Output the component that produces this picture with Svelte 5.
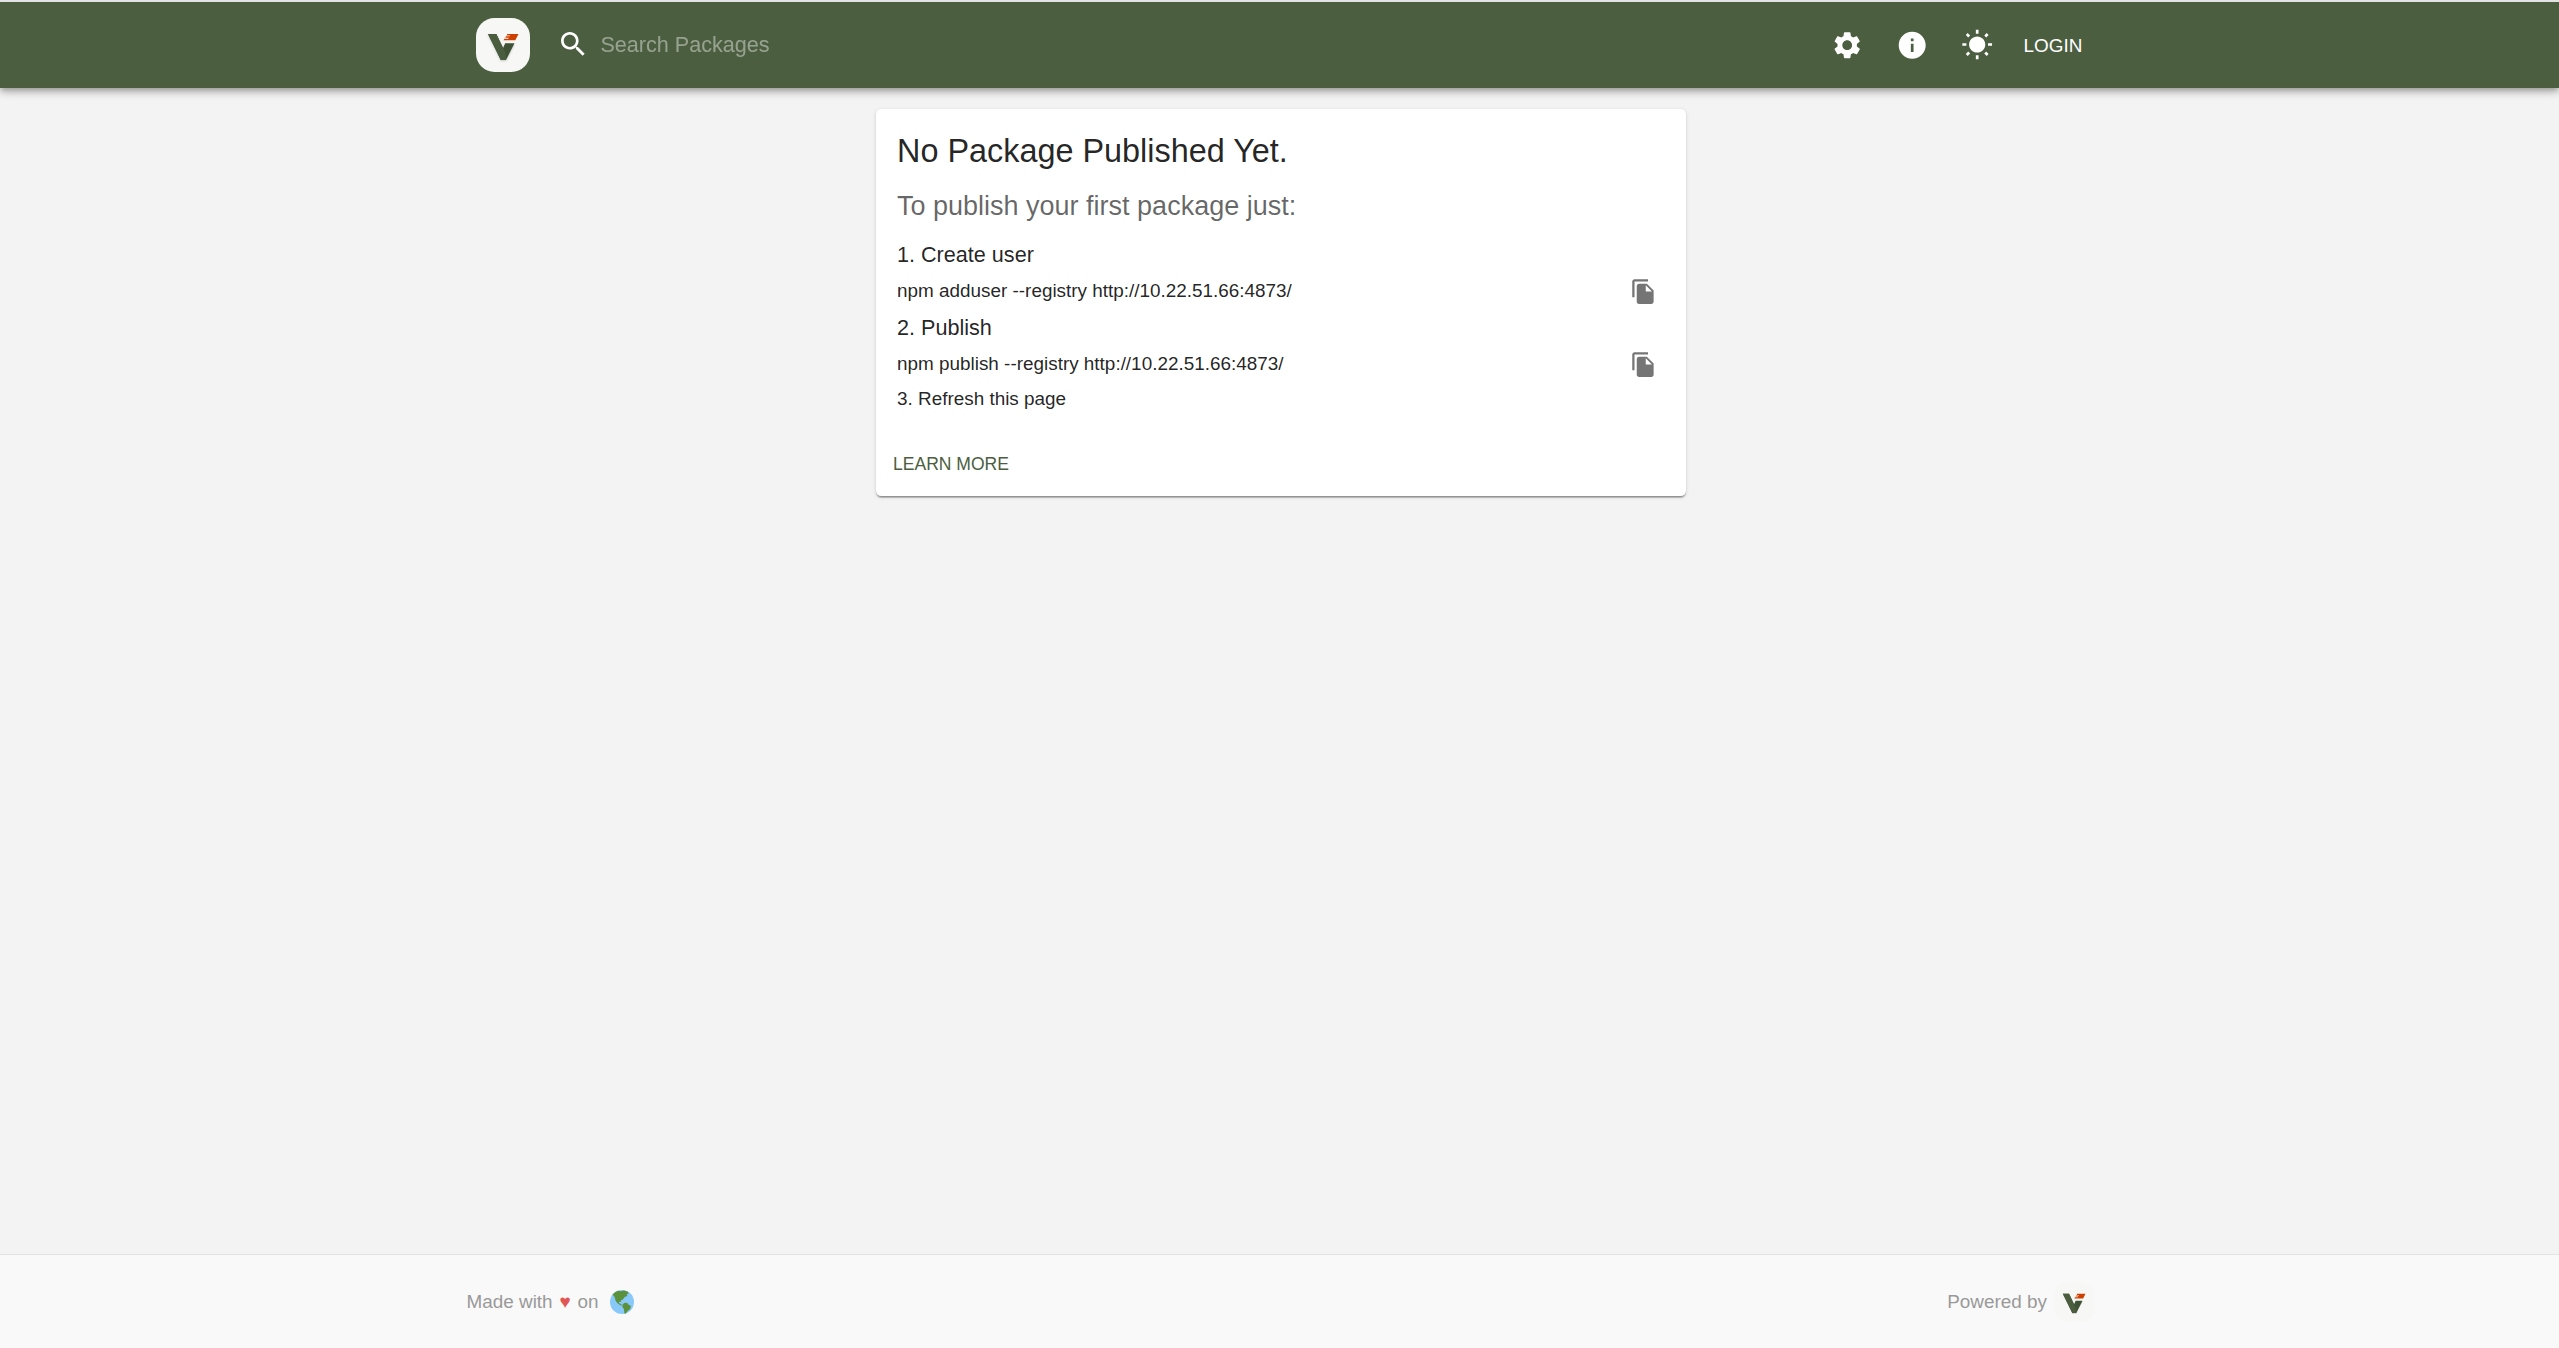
<script>
  const steps = [
    { title: '1. Create user', command: 'npm adduser --registry http://10.22.51.66:4873/' },
    { title: '2. Publish', command: 'npm publish --registry http://10.22.51.66:4873/' },
  ];
</script>

{#snippet logo()}
  <svg class="logo" viewBox="0 0 54 54" aria-label="Verdaccio">
    <rect width="54" height="54" rx="18.5" fill="#f7f8f6" />
    <path class="mark" d="M12 16h8.3l6.8 14 2.1-4.8h9.3L30 42h-5.2z" fill="#405236" />
    <path d="M12 16h8.3l8.700 18L30 42h-5.2z" fill="#4a5e3f" />
    <path d="M31.2 16h11.3l-3.2 6.2H27.5l.8-1.5h4l.5-1h-3.6l.8-1.4h3.6l.4-.9h-3.3z" fill="#cd4000" />
  </svg>
{/snippet}

<div class="page">
  <header>
    <div class="bar">
      {@render logo()}
      <label class="search">
        <svg class="icon" viewBox="0 0 24 24"><path d="M15.5 14h-.79l-.28-.27C15.41 12.59 16 11.11 16 9.5 16 5.91 13.09 3 9.5 3S3 5.91 3 9.5 5.91 16 9.5 16c1.61 0 3.09-.59 4.23-1.57l.27.28v.79l5 4.99L20.49 19l-4.99-5zm-6 0C7.01 14 5 11.99 5 9.5S7.01 5 9.5 5 14 7.01 14 9.5 11.99 14 9.5 14z" /></svg>
        <input placeholder="Search Packages" />
      </label>
      <nav>
        <svg class="icon" viewBox="0 0 24 24"><path d="M19.14 12.94c.04-.3.06-.61.06-.94 0-.32-.02-.64-.07-.94l2.03-1.58c.18-.14.23-.41.12-.61l-1.92-3.32c-.12-.22-.37-.29-.59-.22l-2.39.96c-.5-.38-1.03-.7-1.62-.94l-.36-2.54c-.04-.24-.24-.41-.48-.41h-3.84c-.24 0-.43.17-.47.41l-.36 2.54c-.59.24-1.13.57-1.62.94l-2.39-.96c-.22-.08-.47 0-.59.22L2.74 8.87c-.12.21-.08.47.12.61l2.03 1.58c-.05.3-.09.63-.09.94s.02.64.07.94l-2.03 1.58c-.18.14-.23.41-.12.61l1.92 3.32c.12.22.37.29.59.22l2.39-.96c.5.38 1.03.7 1.62.94l.36 2.54c.05.24.24.41.48.41h3.84c.24 0 .44-.17.47-.41l.36-2.54c.59-.24 1.13-.56 1.62-.94l2.39.96c.22.08.47 0 .59-.22l1.92-3.32c.12-.22.07-.47-.12-.61l-2.01-1.58zM12 15.6c-1.98 0-3.6-1.62-3.6-3.6s1.62-3.6 3.6-3.6 3.6 1.62 3.6 3.6-1.62 3.6-3.6 3.6z" /></svg>
        <svg class="icon" viewBox="0 0 24 24"><path d="M12 2C6.48 2 2 6.48 2 12s4.48 10 10 10 10-4.48 10-10S17.52 2 12 2zm1 15h-2v-6h2v6zm0-8h-2V7h2v2z" /></svg>
        <svg class="icon" viewBox="0 0 24 24"><path d="M6.76 4.84l-1.8-1.79-1.41 1.41 1.79 1.79 1.42-1.41zM4 10.5H1v2h3v-2zm9-9.95h-2V3.5h2V.55zm7.45 3.91l-1.41-1.41-1.79 1.79 1.41 1.41 1.79-1.79zm-3.21 13.7l1.79 1.8 1.41-1.41-1.8-1.79-1.4 1.4zM20 10.5v2h3v-2h-3zm-8-5c-3.31 0-6 2.69-6 6s2.69 6 6 6 6-2.69 6-6-2.69-6-6-6zm-1 16.95h2V19.5h-2v2.95zm-7.45-3.91l1.41 1.41 1.79-1.8-1.41-1.41-1.79 1.8z" /></svg>
        <button class="login">LOGIN</button>
      </nav>
    </div>
  </header>

  <main>
    <section class="card">
      <h1>No Package Published Yet.</h1>
      <h2>To publish your first package just:</h2>
      {#each steps as step}
        <h3>{step.title}</h3>
        <div class="command">
          <span>{step.command}</span>
          <svg class="copy" viewBox="0 0 24 24"><path d="M16 1H4c-1.1 0-2 .9-2 2v14h2V3h12V1zm-1 4l6 6v10c0 1.1-.9 2-2 2H7.99C6.89 23 6 22.1 6 21l.01-14c0-1.1.89-2 1.99-2h7zm-1 7h5.5L14 6.5V12z" /></svg>
        </div>
      {/each}
      <p>3. Refresh this page</p>
      <button class="learn">LEARN MORE</button>
    </section>
  </main>

  <footer>
    <div class="foot">
      <div class="made">
        <span>Made with</span>
        <span class="heart">♥</span>
        <span>on</span>
        <svg class="globe" viewBox="0 0 36 36">
          <circle cx="18" cy="18" r="18" fill="#88c9f9" />
          <path d="M3.500 7.500C6 4.500 9 2.200 12 1.200l4 .8 5-1.200 6 2 1 2.700-3 .5 1 3-4 1.500-3 4-3 1 1 2.500-3-.5-1 1.500 3 2 2 1.500-1 1-5-3-3.500-4-1.500-5.500-2-3z" fill="#5c913b" />
          <path d="M19 21.500l3-2.500 4 .5 2 2.500 3.500 2-1.500 5-4 3-2.500 3.500-2-.5-.500-6-2.500-4z" fill="#5c913b" />
        </svg>
      </div>
      <div class="powered">
        <span>Powered by</span>
        {@render logo()}
      </div>
    </div>
  </footer>
</div>

<style>
  :global(body) {
    background: #f3f3f3;
  }
  .page {
    display: flex;
    flex-direction: column;
    height: 1348px;
    box-sizing: border-box;
    border-top: 2px solid #e3e3e3;
    font-family: 'Liberation Sans', Arial, sans-serif;
    font-size: 18.9px;
    color: rgba(0, 0, 0, 0.87);
    overflow: hidden;
  }
  header {
    height: 86px;
    background: #4b5e40;
    color: #fff;
    box-shadow:
      0 3px 5px -1px rgba(0, 0, 0, 0.2),
      0 5px 7px rgba(0, 0, 0, 0.14),
      0 1px 13px rgba(0, 0, 0, 0.12);
  }
  .bar {
    display: flex;
    align-items: center;
    height: 86px;
    padding: 0 476px;
  }
  .logo {
    width: 54px;
    height: 54px;
    flex: none;
  }
  .mark {
    filter: drop-shadow(0 1px 1px rgba(0, 0, 0, 0.2));
  }
  .icon {
    width: 32.4px;
    height: 32.4px;
    fill: currentColor;
    flex: none;
  }
  .search {
    display: flex;
    align-items: center;
    gap: 11px;
    margin-left: 27px;
    padding-bottom: 1px;
    flex: 1;
  }
  input {
    flex: 1;
    height: 32px;
    padding: 1px 0 0;
    border: 0;
    outline: 0;
    background: none;
    color: #fff;
    font: 21.6px 'Liberation Sans', Arial, sans-serif;
  }
  input::placeholder {
    color: #fff;
    opacity: 0.42;
  }
  button {
    padding: 0;
    border: 0;
    background: none;
    font: 18.9px 'Liberation Sans', Arial, sans-serif;
    color: inherit;
  }
  nav {
    display: flex;
    align-items: center;
    gap: 32.4px;
  }
  .login {
    height: 42px;
    width: 59.5px;
    margin-left: -2px;
    padding-top: 1px;
    text-align: left;
  }
  main {
    flex: 1;
    display: flex;
    justify-content: center;
    align-items: flex-start;
    padding: 21px 0 0 3px;
  }
  .card {
    box-sizing: border-box;
    width: 810px;
    height: 387px;
    padding: 20px 29px 0 21px;
    background: #fff;
    border-radius: 5.4px;
    box-shadow:
      0 3px 1px -2px rgba(0, 0, 0, 0.2),
      0 1.5px 1px rgba(0, 0, 0, 0.2),
      0 1px 4px rgba(0, 0, 0, 0.12);
  }
  h1,
  h2,
  h3,
  p {
    margin: 0;
    font-weight: 400;
  }
  h1 {
    font-size: 32.4px;
    line-height: 44px;
  }
  h2 {
    margin: 15px 0;
    font-size: 27px;
    line-height: 36px;
    color: rgba(0, 0, 0, 0.6);
  }
  h3 {
    font-size: 21.6px;
    line-height: 32px;
  }
  .command {
    display: flex;
    align-items: center;
    justify-content: space-between;
    height: 39px;
    margin-bottom: 2px;
  }
  .copy {
    width: 27px;
    height: 27px;
    margin-top: 2px;
    fill: #757575;
  }
  p {
    line-height: 27px;
  }
  .learn {
    display: block;
    height: 42px;
    margin: 31px 0 0 -4px;
    font-size: 17.55px;
    color: #4b5e40;
  }
  footer {
    height: 93px;
    border-top: 1px solid #e3e3e3;
    background: #f9f9f9;
    color: #999;
  }
  .foot {
    display: flex;
    align-items: center;
    justify-content: space-between;
    height: 93px;
    padding: 0 465px 0 466.5px;
  }
  .made,
  .powered {
    display: flex;
    align-items: center;
  }
  .heart {
    width: 11px;
    margin: 0 7px;
    color: #e25555;
  }
  .globe {
    width: 24px;
    height: 24px;
    margin-left: 11px;
  }
  .powered .logo {
    width: 40px;
    height: 40px;
    margin-left: 7px;
  }
</style>
